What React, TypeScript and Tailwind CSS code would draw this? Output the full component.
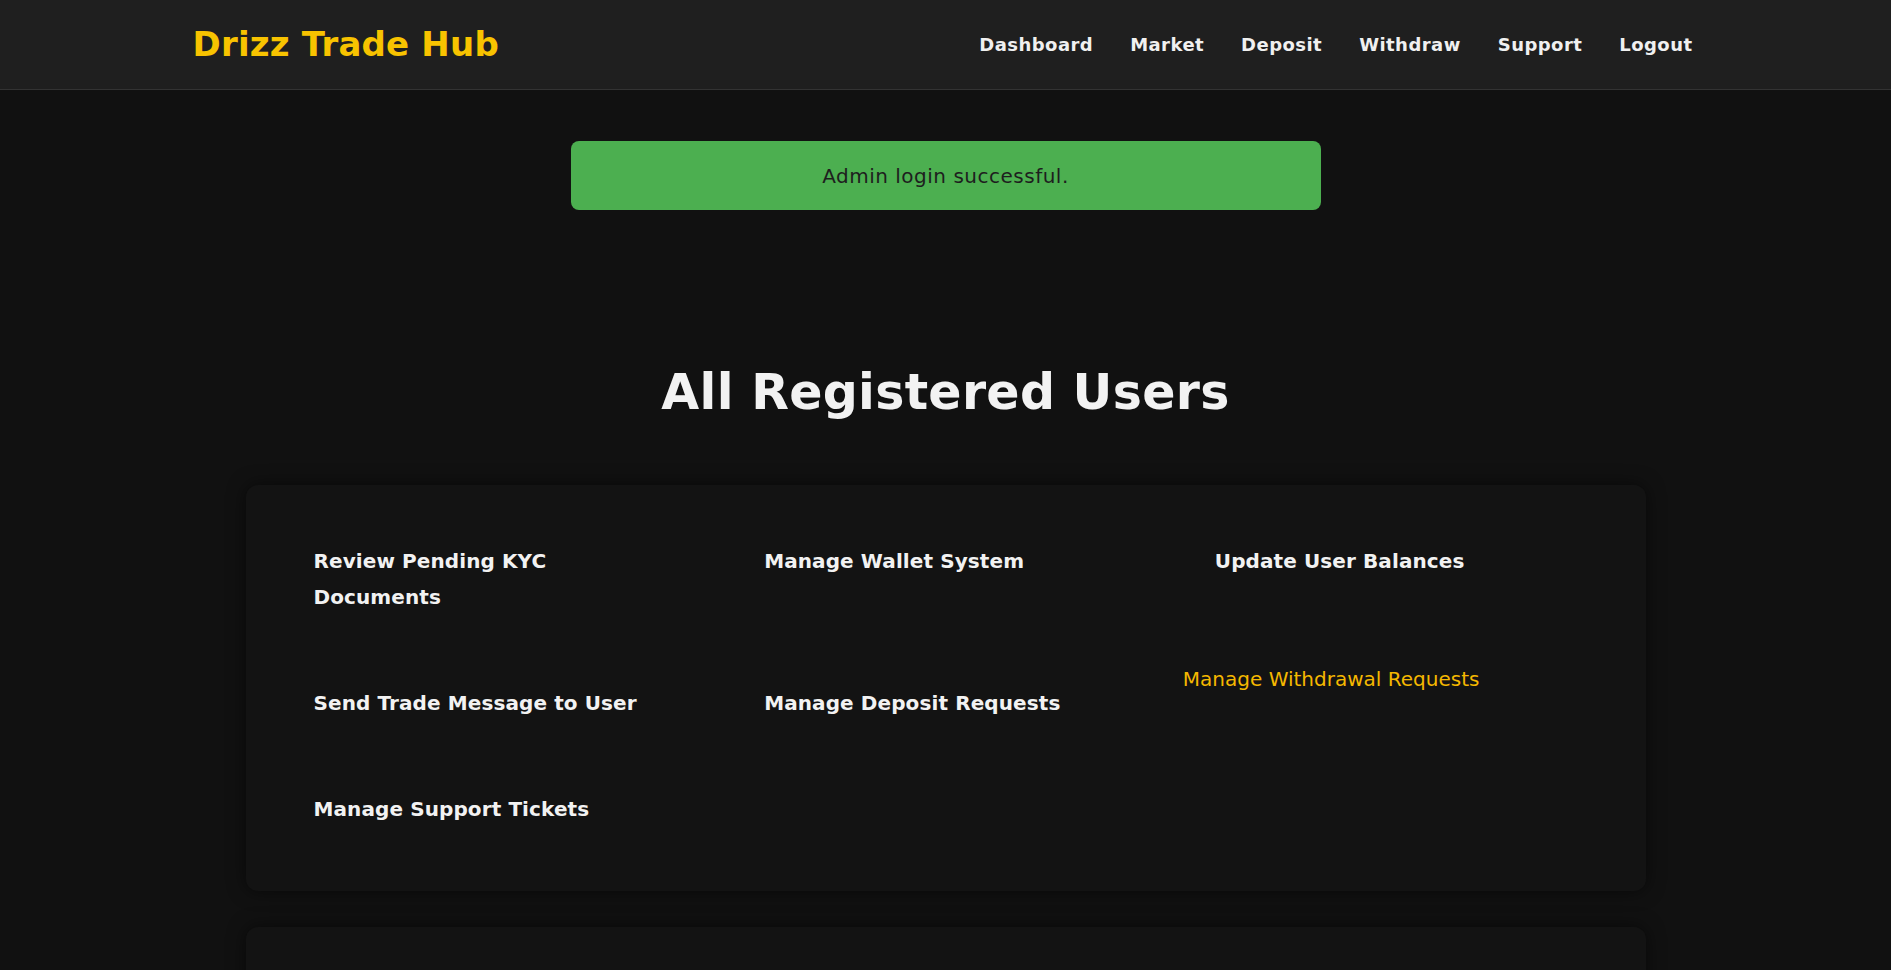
const navLinks = ["Dashboard", "Market", "Deposit", "Withdraw", "Support", "Logout"];

function AdminLink({ label }: { label: string }) {
  return (
    <a href="#" className="block px-8 py-[22px] text-[20px] font-semibold leading-9 tracking-[0.1px] text-[#f2f2f2]">
      {label}
    </a>
  );
}

export default function App() {
  return (
    <div className="min-h-screen bg-[#111111] font-['DejaVu_Sans',sans-serif] text-[#eeeeee]">
      <header className="h-[90px] border-b border-[#333333] bg-[#1f1f1f]">
        <div className="mx-auto flex h-full w-[1506px] items-center justify-between">
          <h1 className="text-[34px] font-bold tracking-[0.2px] text-[#f8c300]">Drizz Trade Hub</h1>
          <nav className="flex items-center gap-[37px] pr-[6px]">
            {navLinks.map((l) => (
              <a key={l} href="#" className="text-[18px] font-semibold tracking-[0.45px] text-[#f0f0f0]">
                {l}
              </a>
            ))}
          </nav>
        </div>
      </header>

      <main className="pb-10">
        <div className="mx-auto mt-[51px] flex h-[69px] w-[750px] items-center justify-center rounded-lg bg-[#4caf50] text-[20px] tracking-[0.5px] text-[#1e1e1e]">
          Admin login successful.
        </div>

        <h2 className="mt-[154px] text-center text-[49px] font-bold leading-[58px] tracking-[0.3px] text-[#f2f2f2]">
          All Registered Users
        </h2>

        <section className="mx-auto mt-[63px] w-[1400px] rounded-xl bg-[#131313] px-9 pt-9 pb-[42px] shadow-[0_0_18px_rgba(0,0,0,0.55)]">
          <div className="grid grid-cols-3 gap-x-6 gap-y-[26px]">
            <AdminLink label="Review Pending KYC Documents" />
            <AdminLink label="Manage Wallet System" />
            <AdminLink label="Update User Balances" />
            <AdminLink label="Send Trade Message to User" />
            <AdminLink label="Manage Deposit Requests" />
            <a href="#" className="block pt-[2px] text-[20px] leading-7 text-[#f5b800]">
              Manage Withdrawal Requests
            </a>
            <AdminLink label="Manage Support Tickets" />
          </div>
        </section>

        <section className="mx-auto mt-[36px] h-[300px] w-[1400px] rounded-xl bg-[#131313] p-9 shadow-[0_0_18px_rgba(0,0,0,0.55)]" />
      </main>
    </div>
  );
}
